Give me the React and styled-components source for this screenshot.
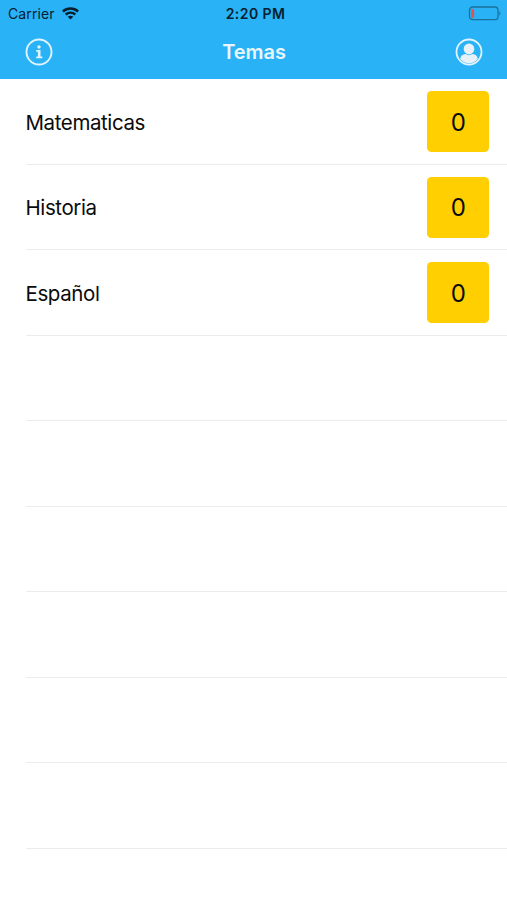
import React from "react";
import styled, { createGlobalStyle } from "styled-components";

const GlobalStyle = createGlobalStyle`
  * { box-sizing: border-box; }
  body { margin: 0; background: #fff; overflow: hidden; }
`;

const Screen = styled.main`
  width: 507px;
  height: 900px;
  overflow: hidden;
  background: #fff;
  color: #0b0b0b;
  font-family: Inter, "Liberation Sans", sans-serif;
`;

const Header = styled.header`
  height: 79.4px;
  background: #29b2f6;
`;

const StatusBar = styled.div`
  display: grid;
  grid-template-columns: 1fr auto 1fr;
  align-items: center;
  height: 27px;
  padding: 0 5px 0 8px;
  color: #06202f;
`;

const Carrier = styled.div`
  display: flex;
  align-items: center;
  gap: 7px;
  font-size: 14px;
  letter-spacing: 0.12px;
`;

const Clock = styled.time`
  padding-left: 1px;
  font-size: 14px;
  font-weight: 600;
  letter-spacing: 0.42px;
`;

const BatteryIcon = styled.svg`
  display: block;
  justify-self: end;
  margin-right: 1px;
`;

const NavBar = styled.nav`
  display: grid;
  grid-template-columns: 1fr auto 1fr;
  align-items: center;
  height: 50px;
  padding: 0 24px 0 25px;
`;

const Title = styled.h1`
  margin: 0;
  color: #e8f6fe;
  font-size: 20px;
  font-weight: 600;
  letter-spacing: -0.05px;
`;

const IconButton = styled.button`
  display: block;
  justify-self: ${({ $side }) => $side};
  width: 28px;
  height: 28px;
  padding: 0;
  border: 0;
  background: none;
  svg { display: block; }
`;

const TopicList = styled.ul`
  margin: 0;
  padding: 0 0 0 25.5px;
  list-style: none;
`;

const TopicRow = styled.li`
  display: flex;
  align-items: center;
  justify-content: space-between;
  height: 85.5px;
  padding-right: 18px;
  border-bottom: 1px solid #ececee;
`;

const TopicName = styled.span`
  padding-top: 1px;
  font-size: 20.5px;
  letter-spacing: -0.4px;
`;

const Score = styled.span`
  display: flex;
  align-items: center;
  justify-content: center;
  width: 61.6px;
  height: 61px;
  padding-top: 1px;
  border-radius: 4.5px;
  background: #ffcf01;
  font-size: 24px;
`;

const topics = [
  { name: "Matematicas", score: 0 },
  { name: "Historia", score: 0 },
  { name: "Español", score: 0 },
];
const emptyRows = Array.from({ length: 7 }, (_, i) => i);

function Wifi() {
  return (
    <svg width="17" height="13" viewBox="0 0 17 13" fill="none" stroke="#06202f" strokeWidth="2.4">
      <path d="M.9 4.500C5.200.5 11.800.5 16.100 4.500" />
      <path d="M3.700 7.500c2.700-2.500 6.900-2.500 9.600 0" />
      <path d="M8.500 12.500 5.700 9.700c1.600-1.400 4-1.400 5.600 0z" fill="#06202f" stroke="none" />
    </svg>
  );
}

function Battery() {
  return (
    <BatteryIcon width="33" height="15" viewBox="0 0 33 15" fill="none">
      <rect x="1.500" y="1" width="28.500" height="12.700" rx="3.200" stroke="#1b7199" strokeWidth="1.300" />
      <rect x="3.300" y="3" width="2.800" height="8.700" rx="0.900" fill="#e9504b" />
      <path d="M31.300 5.200c1.500.7 1.500 3.600 0 4.300z" fill="#1b7199" />
    </BatteryIcon>
  );
}

function Info() {
  return (
    <svg width="28" height="28" viewBox="0 0 28 28" fill="none">
      <circle cx="14" cy="14" r="12.500" stroke="#e0f3fe" strokeWidth="1.900" />
      <circle cx="14" cy="9" r="1.700" fill="#e0f3fe" />
      <path d="M11.200 12h4.300v6.500h1.800v1.700h-6.100v-1.700h1.700v-4.800h-1.700z" fill="#e0f3fe" />
    </svg>
  );
}

function Profile() {
  return (
    <svg width="28" height="28" viewBox="0 0 28 28" fill="none">
      <circle cx="14" cy="14" r="12.500" stroke="#e0f3fe" strokeWidth="1.800" />
      <ellipse cx="14" cy="10.900" rx="5.300" ry="5.500" fill="#e8f1f7" />
      <path d="M5.200 21c.5-3.300 2.500-4.500 5.400-4.900 2 1.400 4.800 1.400 6.800 0 2.900.4 4.900 1.600 5.400 4.900-4.300 5.700-13.300 5.700-17.600 0z" fill="#e8f1f7" />
    </svg>
  );
}

export default function App() {
  return (
    <>
      <GlobalStyle />
      <Screen>
        <Header>
          <StatusBar>
            <Carrier>Carrier<Wifi /></Carrier>
            <Clock>2:20 PM</Clock>
            <Battery />
          </StatusBar>
          <NavBar>
            <IconButton $side="start" aria-label="Información"><Info /></IconButton>
            <Title>Temas</Title>
            <IconButton $side="end" aria-label="Perfil"><Profile /></IconButton>
          </NavBar>
        </Header>
        <TopicList>
          {topics.map(({ name, score }) => (
            <TopicRow key={name}>
              <TopicName>{name}</TopicName>
              <Score>{score}</Score>
            </TopicRow>
          ))}
          {emptyRows.map((row) => <TopicRow key={row} aria-hidden="true" />)}
        </TopicList>
      </Screen>
    </>
  );
}
